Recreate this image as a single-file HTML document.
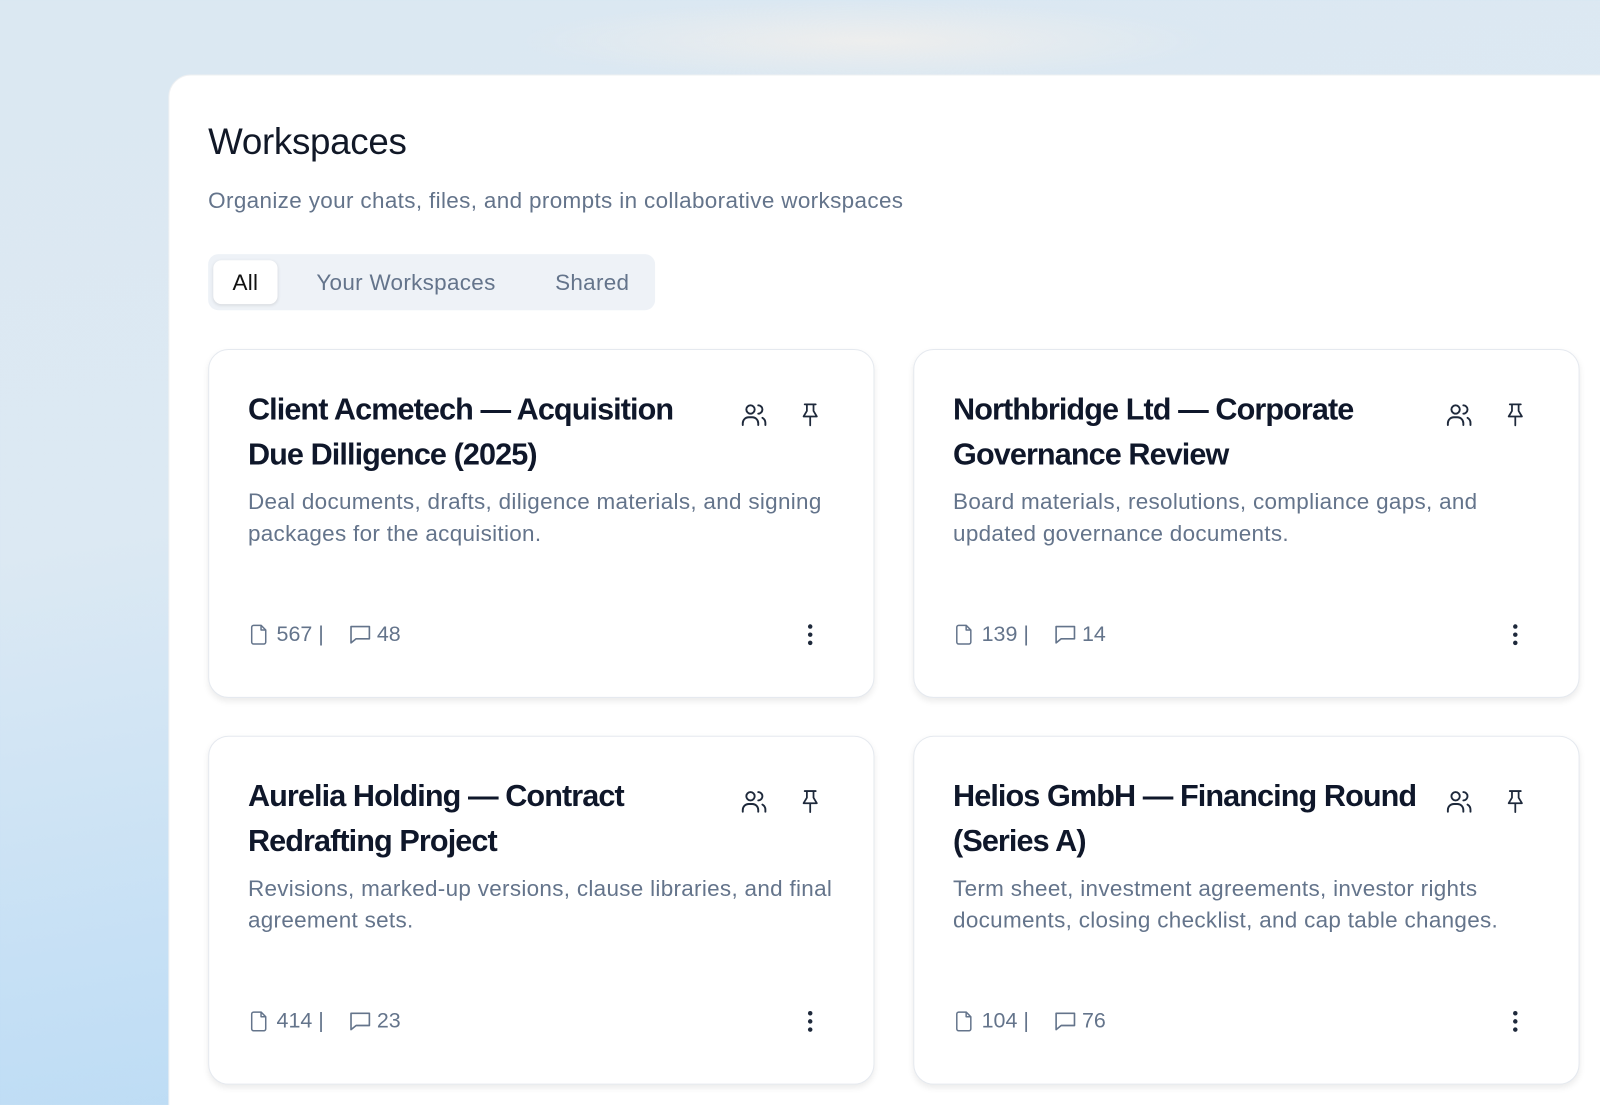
<!DOCTYPE html>
<html><head><meta charset="utf-8"><style>
*{box-sizing:border-box;margin:0;padding:0}
html,body{width:1600px;height:1105px;overflow:hidden}
body{font-family:"Liberation Sans",sans-serif;background:linear-gradient(170deg,#dbe8f2 0%,#dce9f3 40%,#c6e0f5 70%,#b2d7f4 100%);position:relative}
#wrap{position:absolute;left:0;top:0;width:1568px;height:1083px;transform:scale(1.0204);transform-origin:0 0}
.topglow{position:absolute;left:500px;top:0;width:700px;height:80px;background:radial-gradient(ellipse at center,rgba(245,240,235,.7),rgba(245,240,235,0) 70%)}
.panel{position:absolute;left:165px;top:73px;width:1440px;height:1040px;background:#fff;border-radius:22px 0 0 0;border:1px solid #eef0f2}
h1{position:absolute;left:38px;top:44px;font-size:36px;font-weight:400;color:#111827;letter-spacing:-0.3px}
.sub{position:absolute;left:38px;top:110px;font-size:22px;letter-spacing:0.35px;color:#64748b}
.tabs{position:absolute;left:38px;top:175px;width:438px;height:55px;background:#eef2f7;border-radius:10px}
.tab{position:absolute;top:0;height:55px;line-height:55px;font-size:22px;letter-spacing:0.3px;color:#64748b}
.tab.on{left:5px;top:6px;height:43px;line-height:43px;width:63px;text-align:center;background:#fff;border-radius:8px;color:#111;box-shadow:0 1px 3px rgba(0,0,0,.1)}
.card{position:absolute;width:653px;height:342px;background:#fff;border:1.5px solid #e5e9ef;border-radius:20px;box-shadow:0 3px 6px rgba(0,0,0,.08)}
.card h2{position:absolute;left:38px;top:37px;width:475px;font-size:30px;line-height:44px;font-weight:700;color:#0f172a;letter-spacing:-0.9px}
.card p{position:absolute;left:38px;top:133px;width:580px;font-size:22px;letter-spacing:0.3px;line-height:31px;color:#64748b}
.ic{position:absolute;top:49px}
.foot{position:absolute;left:38px;top:267px;font-size:21px;color:#64748b;display:flex;align-items:center}
.dots{position:absolute;right:58px;top:268px}
</style></head><body>
<div id="wrap">
<div class="topglow"></div>
<div class="panel">
<h1>Workspaces</h1>
<div class="sub">Organize your chats, files, and prompts in collaborative workspaces</div>
<div class="tabs"><div class="tab on">All</div><div class="tab" style="left:106px">Your Workspaces</div><div class="tab" style="left:340px">Shared</div></div>
</div>
<div id="cards"></div>
</div>
<script>
const data=[
[204,342,"Client Acmetech — Acquisition Due Dilligence (2025)","Deal documents, drafts, diligence materials, and signing packages for the acquisition.","567","48"],
[895,342,"Northbridge Ltd — Corporate Governance Review","Board materials, resolutions, compliance gaps, and updated governance documents.","139","14"],
[204,721,"Aurelia Holding — Contract Redrafting Project","Revisions, marked-up versions, clause libraries, and final agreement sets.","414","23"],
[895,721,"Helios GmbH — Financing Round (Series A)","Term sheet, investment agreements, investor rights documents, closing checklist, and cap table changes.","104","76"]];
const users='<svg class="ic" style="left:520px" width="28" height="28" viewBox="0 0 24 24" fill="none" stroke="#1e293b" stroke-width="1.6" stroke-linecap="round"><circle cx="9" cy="8" r="3.5"/><path d="M2.5 21v-1.5a5 5 0 0 1 5-5h3a5 5 0 0 1 5 5V21"/><path d="M15.5 4.5a3.5 3.5 0 0 1 0 7"/><path d="M19 15a5 5 0 0 1 2.5 4.5V21"/></svg>';
const pin='<svg class="ic" style="left:576px" width="26" height="28" viewBox="0 0 24 24" fill="none" stroke="#1e293b" stroke-width="1.6" stroke-linejoin="round" stroke-linecap="round"><path d="M7 3h10M9 3v6l-3 5h12l-3-5V3M12 14v8"/></svg>';
const file='<svg width="22" height="24" viewBox="0 0 24 24" fill="none" stroke="#64748b" stroke-width="1.6" stroke-linejoin="round"><path d="M6 2h8l5 5v13a2 2 0 0 1-2 2H6a2 2 0 0 1-2-2V4a2 2 0 0 1 2-2z"/><path d="M14 2v5h5"/></svg>';
const chat='<svg width="24" height="24" viewBox="0 0 24 24" fill="none" stroke="#64748b" stroke-width="1.6" stroke-linejoin="round"><path d="M3 4h18v12H8l-5 4z"/></svg>';
const dots='<svg class="dots" width="8" height="22" viewBox="0 0 8 22"><circle cx="4" cy="3" r="2.2" fill="#1e293b"/><circle cx="4" cy="11" r="2.2" fill="#1e293b"/><circle cx="4" cy="19" r="2.2" fill="#1e293b"/></svg>';
let h='';
for(const d of data){h+=`<div class="card" style="left:${d[0]}px;top:${d[1]}px"><h2>${d[2]}</h2>${users}${pin}<p>${d[3]}</p><div class="foot">${file}<span style="margin-left:6px">${d[4]} |</span><span style="margin-left:24px;display:flex">${chat}</span><span style="margin-left:4px">${d[5]}</span></div>${dots}</div>`}
document.getElementById('cards').innerHTML=h;
</script>
</body></html>
